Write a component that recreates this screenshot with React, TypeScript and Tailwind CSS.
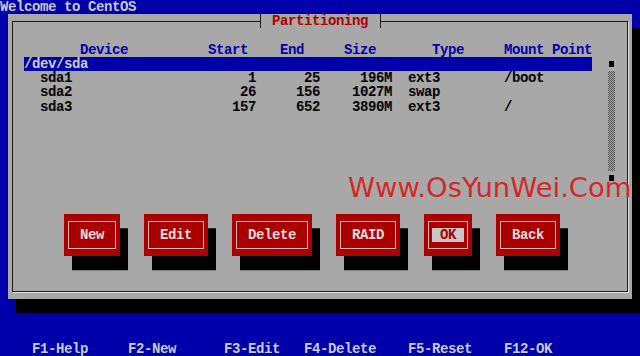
import clsx from "clsx";

// the screen is an 80x25 text console: 8px columns, 14.24px rows
type Part = [number, string];

// build a line of text where every part starts at a given screen column
function line(parts: Part[], from = 0) {
  let s = "";
  for (const [col, text] of parts) s = s.padEnd(col - from) + text;
  return s;
}

// right aligned text that ends just before column `end`
const right = (end: number, text: string): Part => [end - text.length, text];

const header = line(
  [
    [10, "Device"],
    [26, "Start"],
    [35, "End"],
    [43, "Size"],
    [54, "Type"],
    [63, "Mount Point"],
  ],
  3
);

const partitions = [
  ["sda1", "1", "25", "196M", "ext3", "/boot"],
  ["sda2", "26", "156", "1027M", "swap", ""],
  ["sda3", "157", "652", "3890M", "ext3", "/"],
].map(([dev, start, end, size, type, mount]) =>
  line([[5, dev], right(32, start), right(40, end), right(49, size), [51, type], [63, mount]], 3)
);

const footer = line([
  [4, "F1-Help"],
  [16, "F2-New"],
  [28, "F3-Edit"],
  [38, "F4-Delete"],
  [51, "F5-Reset"],
  [63, "F12-OK"],
]);

const buttons = [
  { label: "New", w: "w-[56px]" },
  { label: "Edit", w: "w-[64px]" },
  { label: "Delete", w: "w-[80px]" },
  { label: "RAID", w: "w-[64px]" },
  { label: "OK", w: "w-[48px]", focused: true },
  { label: "Back", w: "w-[64px]" },
];

function Button({ label, w, focused }: { label: string; w: string; focused?: boolean }) {
  return (
    <div className={clsx("relative flex h-[42.72px] items-center justify-center bg-[#aa0000] shadow-[8px_14.24px_0_#000]", w)}>
      <div className="absolute inset-x-[4px] inset-y-[7px] border border-[#efb6b6]" />
      <span
        className={clsx(
          "relative flex h-[14.24px] items-center",
          focused ? "bg-[#c8c8c8] px-[8px] text-[#aa0000]" : "text-[#eedcdc]"
        )}
      >
        {label}
      </span>
    </div>
  );
}

export default function App() {
  return (
    <div className="relative flex h-[356px] w-[640px] flex-col overflow-hidden whitespace-pre bg-[#0000aa] font-['Liberation_Mono',monospace] text-[14px] font-bold leading-[14.24px] tracking-[-0.4px]">
      <div className="h-[14.24px] text-[#c8c8d4]">Welcome to CentOS</div>

      {/* dialog window */}
      <div className="relative ml-[8px] h-[284.8px] w-[624px] bg-[#a8a8a8] pt-[28.48px] shadow-[8px_14.24px_0_#000]">
        <div className="pointer-events-none absolute inset-x-[4px] inset-y-[7px] border border-[#1c1c1c] shadow-[1px_1px_0_#e4e4e4]" />
        <div className="absolute left-[252px] top-0 h-[14.24px] w-[121px] border-x border-[#1c1c1c] bg-[#a8a8a8] pl-[11px] text-[#aa0000]">
          Partitioning
        </div>

        <div className="flex pl-[16px]">
          <div className="w-[568px]">
            <div className="h-[14.24px] text-[#0000aa]">{header}</div>
            <div className="h-[14.24px] bg-[#0000aa] text-[#cccccc]">/dev/sda</div>
            {partitions.map((row) => (
              <div key={row} className="h-[14.24px] text-black">
                {row}
              </div>
            ))}
            <div className="h-[71.2px]" />
          </div>

          {/* scrollbar */}
          <div className="ml-[16px] mt-[14.24px] flex w-[8px] flex-col">
            <div className="flex h-[14.24px] items-center pl-[1px]">
              <div className="h-[6px] w-[5px] bg-black" />
            </div>
            <div className="h-[99.68px] w-[7px] bg-[repeating-conic-gradient(#555_0%_25%,#a8a8a8_0%_50%)] bg-[length:2px_2px]" />
            <div className="flex h-[14.24px] items-center pl-[1px]">
              <div className="h-[6px] w-[5px] bg-black" />
            </div>
          </div>
        </div>

        <div className="mt-[28.48px] flex gap-[24px] pl-[56px]">
          {buttons.map((b) => (
            <Button key={b.label} {...b} />
          ))}
        </div>
      </div>

      <div className="mt-[42.72px] h-[14.24px] text-[#c8c8d4]">{footer}</div>

      {/* watermark */}
      <div className="absolute left-[348px] top-[174px] font-['DejaVu_Sans',sans-serif] text-[27.4px] font-normal leading-none tracking-normal text-[#d42828]">
        Www.OsYunWei.Com
      </div>
    </div>
  );
}
